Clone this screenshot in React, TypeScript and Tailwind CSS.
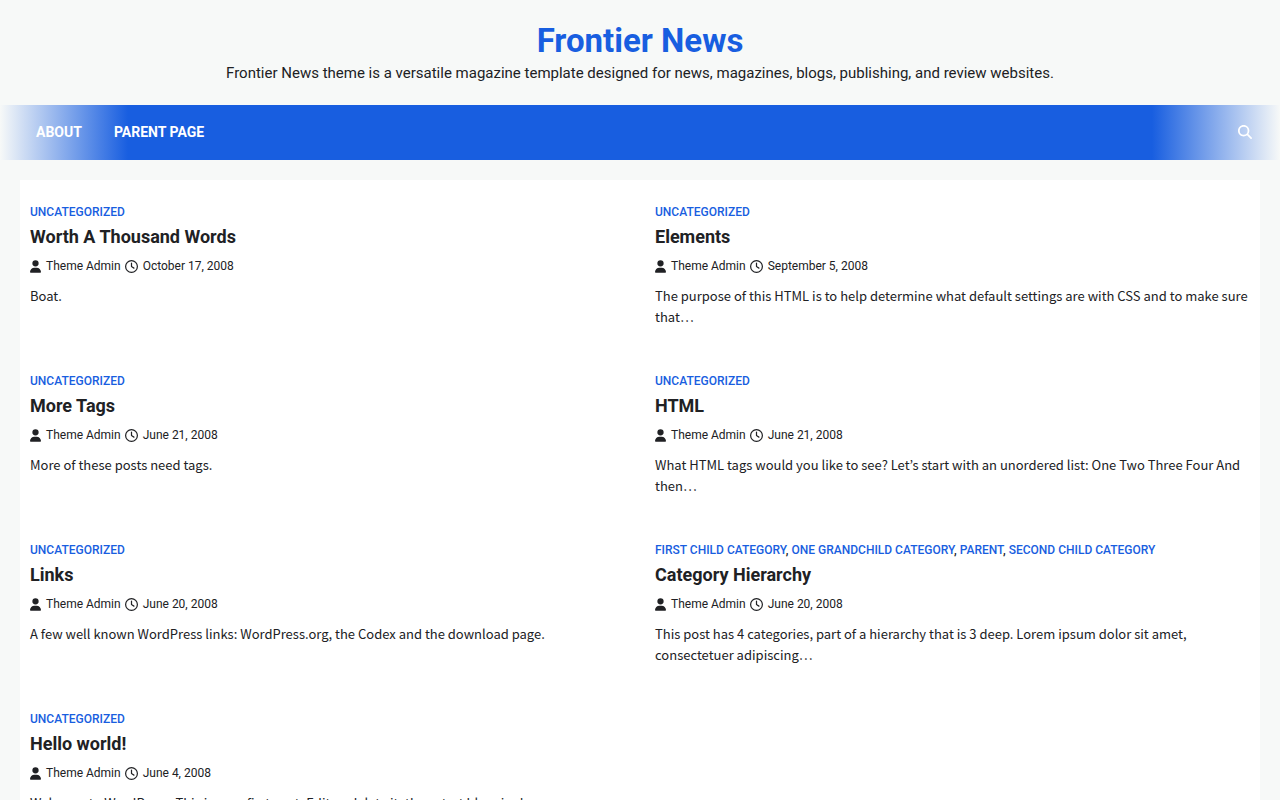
import { FaMagnifyingGlass, FaRegClock, FaUser } from "react-icons/fa6";

interface Post {
  title: string;
  categories: string[];
  date: string;
  excerpt: string;
}

const posts: Post[] = [
  {
    title: "Worth A Thousand Words",
    categories: ["Uncategorized"],
    date: "October 17, 2008",
    excerpt: "Boat.",
  },
  {
    title: "Elements",
    categories: ["Uncategorized"],
    date: "September 5, 2008",
    excerpt:
      "The purpose of this HTML is to help determine what default settings are with CSS and to make sure that…",
  },
  {
    title: "More Tags",
    categories: ["Uncategorized"],
    date: "June 21, 2008",
    excerpt: "More of these posts need tags.",
  },
  {
    title: "HTML",
    categories: ["Uncategorized"],
    date: "June 21, 2008",
    excerpt:
      "What HTML tags would you like to see? Let’s start with an unordered list: One Two Three Four And then…",
  },
  {
    title: "Links",
    categories: ["Uncategorized"],
    date: "June 20, 2008",
    excerpt:
      "A few well known WordPress links: WordPress.org, the Codex and the download page.",
  },
  {
    title: "Category Hierarchy",
    categories: [
      "First Child Category",
      "One Grandchild Category",
      "Parent",
      "Second Child Category",
    ],
    date: "June 20, 2008",
    excerpt:
      "This post has 4 categories, part of a hierarchy that is 3 deep. Lorem ipsum dolor sit amet, consectetuer adipiscing…",
  },
  {
    title: "Hello world!",
    categories: ["Uncategorized"],
    date: "June 4, 2008",
    excerpt:
      "Welcome to WordPress. This is your first post. Edit or delete it, then start blogging!",
  },
];

const menu = ["About", "Parent Page"];

export default function App() {
  return (
    <div className="min-h-screen bg-[#f7f9f8] font-['Roboto',sans-serif] text-[#202124]">
      <header>
        <div className="px-5 pt-[21px] pb-[19px] text-center">
          <h1 className="text-[33px] leading-10 font-bold text-[#185ee0]">
            <a href="#">Frontier News</a>
          </h1>
          <p className="text-[15px] leading-[25px]">
            Frontier News theme is a versatile magazine template designed for
            news, magazines, blogs, publishing, and review websites.
          </p>
        </div>
        <nav className="flex h-[55px] items-center justify-between bg-[linear-gradient(90deg,#f7f9f8_0%,#185ee0_10%,#185ee0_90%,#f7f9f8_100%)] px-5 pb-0.5 text-white">
          <ul className="flex">
            {menu.map((item) => (
              <li key={item}>
                <a href="#" className="block px-4 text-sm font-bold uppercase">
                  {item}
                </a>
              </li>
            ))}
          </ul>
          <button type="button" aria-label="Search" className="p-2">
            <FaMagnifyingGlass className="size-3.5" />
          </button>
        </nav>
      </header>

      <main className="m-5 grid grid-cols-2 gap-x-[30px] bg-white px-2.5 pt-2.5">
        {posts.map((post) => (
          <PostCard key={post.title} post={post} />
        ))}
      </main>
    </div>
  );
}

function PostCard({ post }: { post: Post }) {
  return (
    <article className="min-h-[169px] pt-3">
      <div className="text-xs leading-5 font-medium uppercase">
        {post.categories.map((category, i) => (
          <span key={category}>
            {i > 0 && ", "}
            <a href="#" className="text-[#185ee0]">
              {category}
            </a>
          </span>
        ))}
      </div>
      <h2 className="text-lg leading-[30px] font-bold">
        <a href="#">{post.title}</a>
      </h2>
      <div className="mt-1 flex items-center gap-1 text-xs leading-5">
        <a href="#" className="flex items-center gap-[5px]">
          <FaUser className="h-[13px] w-[11px]" />
          Theme Admin
        </a>
        <a href="#" className="flex items-center gap-[5px]">
          <FaRegClock className="size-[13px]" />
          {post.date}
        </a>
      </div>
      <p className="mt-[9px] font-['Noto_Sans_CJK_KR',sans-serif] text-[13px] leading-[21px]">
        {post.excerpt}
      </p>
    </article>
  );
}
